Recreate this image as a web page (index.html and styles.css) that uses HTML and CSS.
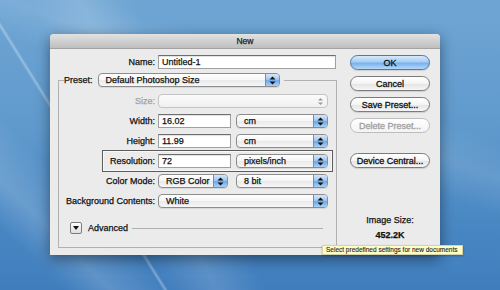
FILE: index.html
```html
<!DOCTYPE html>
<html lang="en">
<head>
    <meta charset="UTF-8">
    <meta name="viewport" content="width=device-width, initial-scale=1.0">
    <title>New</title>
    <link rel="stylesheet" href="styles.css">
</head>
<body>
    <div class="dialog">
        <div class="titlebar">New</div>
        <div class="dialog-body">
            <div class="main">
                <div class="name-row">
                    <span class="label name-label">Name:</span>
                    <div class="field name-field">Untitled-1</div>
                </div>

                <fieldset class="preset-box">
                    <legend class="preset-legend">
                        <span class="legend-label">Preset:</span>
                        <div class="popup preset-popup">Default Photoshop Size<span class="stepper"><svg width="7" height="9" viewBox="0 0 7 9"><polygon points="0.5,3.5 3.5,0.5 6.5,3.5"/><polygon points="0.5,5.5 3.5,8.5 6.5,5.5"/></svg></span></div>
                    </legend>

                    <div class="row">
                        <span class="label disabled">Size:</span>
                        <div class="popup popup-disabled size-popup"><span class="stepper"><svg width="7" height="9" viewBox="0 0 7 9"><polygon points="1,3.5 3.5,1 6,3.5"/><polygon points="1,5.5 3.5,8 6,5.5"/></svg></span></div>
                    </div>
                    <div class="row">
                        <span class="label">Width:</span>
                        <div class="field num-field">16.02</div>
                        <div class="popup unit-popup">cm<span class="stepper"><svg width="7" height="9" viewBox="0 0 7 9"><polygon points="0.5,3.5 3.5,0.5 6.5,3.5"/><polygon points="0.5,5.5 3.5,8.5 6.5,5.5"/></svg></span></div>
                    </div>
                    <div class="row">
                        <span class="label">Height:</span>
                        <div class="field num-field">11.99</div>
                        <div class="popup unit-popup">cm<span class="stepper"><svg width="7" height="9" viewBox="0 0 7 9"><polygon points="0.5,3.5 3.5,0.5 6.5,3.5"/><polygon points="0.5,5.5 3.5,8.5 6.5,5.5"/></svg></span></div>
                    </div>
                    <div class="row row-focus">
                        <span class="label res-label">Resolution:</span>
                        <div class="field num-field">72</div>
                        <div class="popup unit-popup">pixels/inch<span class="stepper"><svg width="7" height="9" viewBox="0 0 7 9"><polygon points="0.5,3.5 3.5,0.5 6.5,3.5"/><polygon points="0.5,5.5 3.5,8.5 6.5,5.5"/></svg></span></div>
                    </div>
                    <div class="row">
                        <span class="label">Color Mode:</span>
                        <div class="popup mode-popup">RGB Color<span class="stepper"><svg width="7" height="9" viewBox="0 0 7 9"><polygon points="0.5,3.5 3.5,0.5 6.5,3.5"/><polygon points="0.5,5.5 3.5,8.5 6.5,5.5"/></svg></span></div>
                        <div class="popup bits-popup">8 bit<span class="stepper"><svg width="7" height="9" viewBox="0 0 7 9"><polygon points="0.5,3.5 3.5,0.5 6.5,3.5"/><polygon points="0.5,5.5 3.5,8.5 6.5,5.5"/></svg></span></div>
                    </div>
                    <div class="row">
                        <span class="label">Background Contents:</span>
                        <div class="popup wide-popup">White<span class="stepper"><svg width="7" height="9" viewBox="0 0 7 9"><polygon points="0.5,3.5 3.5,0.5 6.5,3.5"/><polygon points="0.5,5.5 3.5,8.5 6.5,5.5"/></svg></span></div>
                    </div>

                    <div class="advanced-row">
                        <span class="disclosure"><svg width="8" height="6" viewBox="0 0 8 6"><polygon points="1,1 7,1 4,5"/></svg></span>
                        <span class="advanced-label">Advanced</span>
                        <span class="advanced-line"></span>
                    </div>
                </fieldset>
            </div>

            <div class="side">
                <button class="btn btn-default">OK</button>
                <button class="btn">Cancel</button>
                <button class="btn">Save Preset...</button>
                <button class="btn btn-disabled">Delete Preset...</button>
                <button class="btn btn-device">Device Central...</button>

                <div class="image-size">
                    <div class="image-size-label">Image Size:</div>
                    <div class="image-size-value">452.2K</div>
                </div>
            </div>
        </div>

        <div class="tooltip">Select predefined settings for new documents</div>
    </div>
</body>
</html>
```

FILE: styles.css
```css
body {
    margin: 0;
    padding: 34px 0 0 50px;
    width: 500px;
    height: 290px;
    box-sizing: border-box;
    overflow: hidden;
    font-family: "Lucida Grande", "Liberation Sans", Arial, sans-serif;
    font-size: 9px;
    color: #111;
    -webkit-text-stroke: 0.25px currentColor;
    background:
        linear-gradient(58deg, transparent 0, transparent 23.9%, rgba(255, 255, 255, 0.32) 24.3%, transparent 24.7%),
        linear-gradient(245deg, transparent 0, transparent 58%, rgba(255, 255, 255, 0.14) 66%, transparent 74%),
        linear-gradient(200deg, transparent 0, transparent 30%, rgba(255, 255, 255, 0.1) 38%, transparent 46%),
        linear-gradient(45deg, transparent 0, transparent 8%, rgba(255, 255, 255, 0.16) 14%, transparent 22%),
        linear-gradient(180deg, #6ea5d4 0%, #5f99cc 45%, #4a88c4 75%, #3f7dbd 100%);
}

.dialog {
    position: relative;
    width: 390px;
    background-color: #ebebeb;
    border-radius: 4px 4px 0 0;
    box-shadow: 0 4px 14px rgba(0, 0, 0, 0.45);
}

.titlebar {
    height: 15px;
    line-height: 15px;
    text-align: center;
    font-size: 8.5px;
    color: #222;
    background: linear-gradient(#e2e2e2, #bfbfbf);
    border-radius: 4px 4px 0 0;
    border-bottom: 1px solid #a3a3a3;
    box-sizing: border-box;
}

.dialog-body {
    display: flex;
    padding: 6px 10px 7px 8px;
    gap: 13px;
}

.main {
    width: 279px;
}

.label {
    width: 96px;
    margin-right: 3px;
    text-align: right;
    white-space: nowrap;
    flex-shrink: 0;
}

.label.disabled {
    color: #a2a2a2;
}

.name-row {
    display: flex;
    align-items: center;
    height: 14px;
}

.name-label {
    width: 97px;
}

.field {
    box-sizing: border-box;
    height: 14px;
    line-height: 12px;
    padding-left: 3px;
    background-color: #fff;
    border: 1px solid #a0a0a0;
    border-top-color: #6e6e6e;
    box-shadow: inset 0 1px 1px rgba(0, 0, 0, 0.12);
}

.name-field {
    width: 178px;
}

.num-field {
    width: 73px;
    margin-right: 5px;
}

/* Preset group box */
.preset-box {
    margin: 4px 0 0 0;
    padding: 7px 0 13px 0;
    width: 279px;
    box-sizing: border-box;
    border: 1px solid #b0b0b0;
    display: flex;
    flex-direction: column;
    gap: 6px;
}

.preset-legend {
    display: flex;
    align-items: center;
    margin-left: 5px;
    padding: 0 4px 0 0;
}

.legend-label {
    margin-right: 5px;
}

/* Popup menus */
.popup {
    box-sizing: border-box;
    height: 14px;
    display: flex;
    align-items: center;
    padding-left: 7px;
    border: 1px solid #8c8c8c;
    border-radius: 4px;
    background: linear-gradient(#ffffff, #f6f6f6 50%, #e9e9e9 51%, #f7f7f7);
    box-shadow: 0 1px 0 rgba(0, 0, 0, 0.08);
    white-space: nowrap;
}

.stepper {
    margin-left: auto;
    width: 13px;
    height: 12px;
    display: flex;
    align-items: center;
    justify-content: center;
    border-left: 1px solid #6f8fb8;
    border-radius: 0 3px 3px 0;
    background: linear-gradient(#d6e8fb, #9fc7f1 45%, #6ea9ea 55%, #a8d0f7);
}

.stepper svg {
    fill: #111;
}

.popup-disabled {
    border-color: #c4c4c4;
    background: linear-gradient(#fbfbfb, #f0f0f0);
    box-shadow: none;
}

.popup-disabled .stepper {
    border-left-color: transparent;
    background: none;
}

.popup-disabled .stepper svg {
    fill: #9a9a9a;
}

.preset-popup {
    width: 182px;
}

.size-popup,
.wide-popup {
    width: 170px;
}

.unit-popup {
    width: 92px;
}

.mode-popup {
    width: 70px;
    margin-right: 8px;
}

.bits-popup {
    width: 92px;
}

/* Rows inside the group */
.row {
    display: flex;
    align-items: center;
    height: 14px;
}

.row-focus {
    height: auto;
    margin: -4px 3px -4px 43px;
    padding: 3px 4px 3px 0;
    border: 1px solid #5c5c5c;
    box-shadow: inset 0 0 0 1px #f7f7f7;
}

.res-label {
    width: 52px;
}

.advanced-row {
    display: flex;
    align-items: center;
    height: 12px;
    margin-top: 8px;
    padding-left: 11px;
}

.disclosure {
    box-sizing: border-box;
    width: 12px;
    height: 12px;
    margin-right: 6px;
    display: flex;
    align-items: center;
    justify-content: center;
    border: 1px solid #7c7c7c;
    border-radius: 2px;
    background: linear-gradient(#ffffff, #dedede);
}

.disclosure svg {
    fill: #111;
}

.advanced-line {
    flex: 1;
    height: 1px;
    margin: 0 13px 0 4px;
    background-color: #b0b0b0;
}

/* Side buttons */
.side {
    width: 80px;
    display: flex;
    flex-direction: column;
}

.btn {
    box-sizing: border-box;
    width: 80px;
    height: 15px;
    margin: 0 0 6px 0;
    padding: 0;
    font-family: inherit;
    font-size: 9px;
    color: #111;
    -webkit-text-stroke: 0.3px currentColor;
    border: 1px solid #7b7b7b;
    border-radius: 8px;
    background: linear-gradient(#ffffff, #f4f4f4 50%, #e3e3e3 51%, #f6f6f6);
    box-shadow: 0 1px 1px rgba(0, 0, 0, 0.12);
}

.btn-default {
    border-color: #4f78a6;
    background: linear-gradient(#d7eafc, #a7cdf3 45%, #78b1ec 55%, #b4daf9);
}

.btn-disabled {
    color: #a0a0a0;
    border-color: #bdbdbd;
    background: linear-gradient(#ffffff, #f3f3f3);
    box-shadow: none;
}

.btn-device {
    margin-top: 14px;
}

.image-size {
    margin-top: 40px;
    text-align: center;
}

.image-size-label {
    line-height: 12px;
}

.image-size-value {
    margin-top: 3px;
    line-height: 12px;
    font-weight: bold;
}

.tooltip {
    position: absolute;
    left: 272px;
    top: 211px;
    width: 141px;
    height: 10px;
    box-sizing: border-box;
    padding-left: 3px;
    font-size: 6.5px;
    line-height: 8px;
    white-space: nowrap;
    color: #222;
    -webkit-text-stroke: 0.1px currentColor;
    background-color: #fdfdc8;
    border: 1px solid #d4d4a8;
    box-shadow: 0 1px 2px rgba(0, 0, 0, 0.25);
}
```
